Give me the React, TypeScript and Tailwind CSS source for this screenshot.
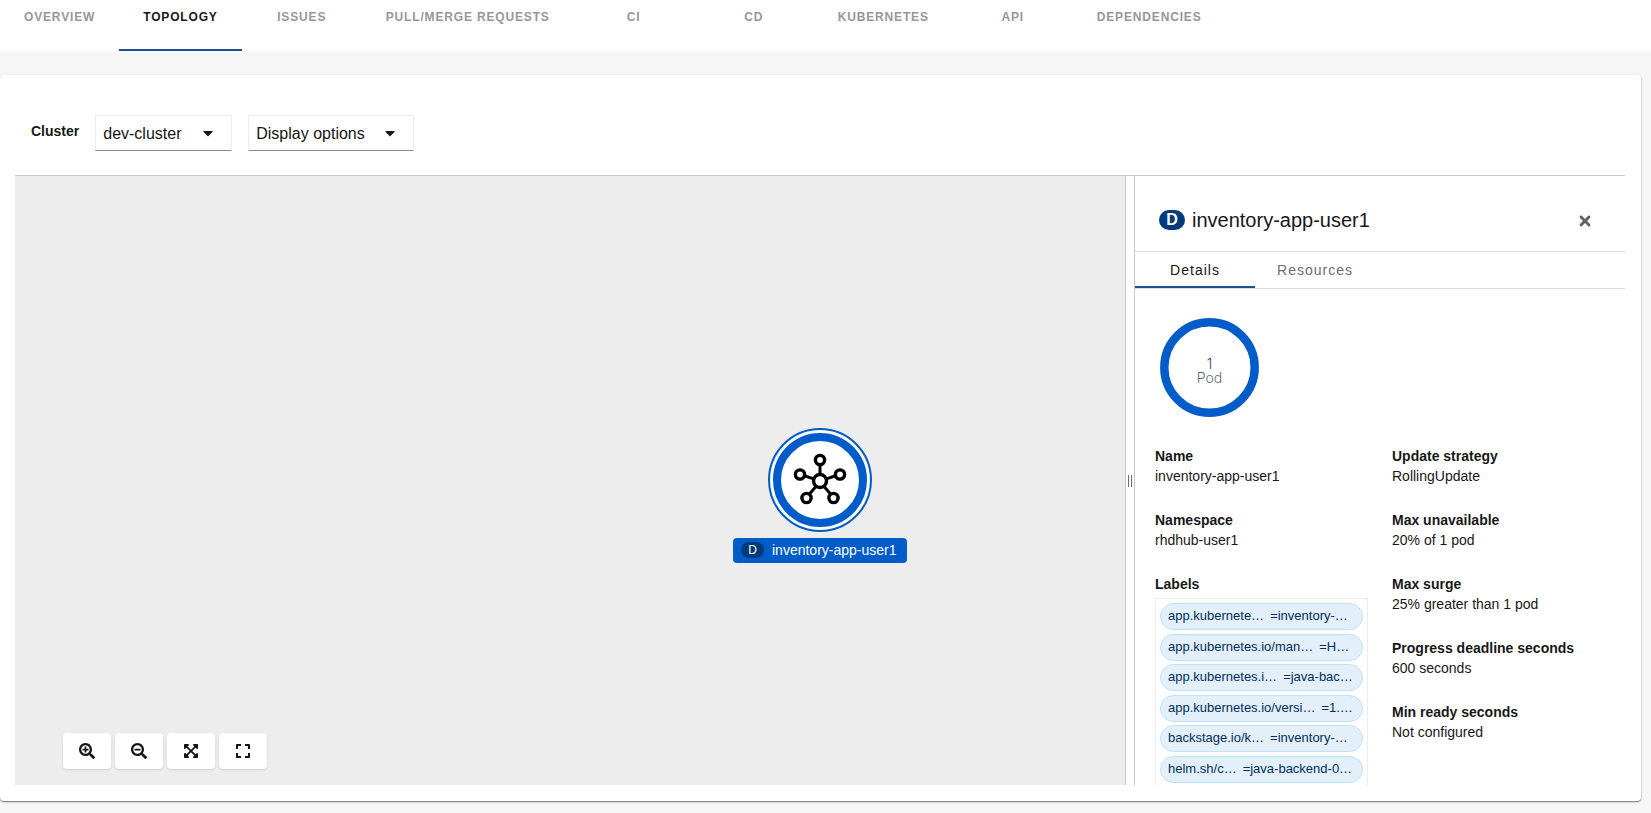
import { FaCaretDown, FaExpand, FaExpandArrowsAlt, FaSearchMinus, FaSearchPlus, FaTimes } from 'react-icons/fa';

const navTabs = [
  'OVERVIEW',
  'TOPOLOGY',
  'ISSUES',
  'PULL/MERGE REQUESTS',
  'CI',
  'CD',
  'KUBERNETES',
  'API',
  'DEPENDENCIES',
];

const labels = [
  ['app.kubernete…', '=inventory-…'],
  ['app.kubernetes.io/man…', '=H…'],
  ['app.kubernetes.i…', '=java-bac…'],
  ['app.kubernetes.io/versi…', '=1.…'],
  ['backstage.io/k…', '=inventory-…'],
  ['helm.sh/c…', '=java-backend-0…'],
];

const strategy = [
  ['Update strategy', 'RollingUpdate'],
  ['Max unavailable', '20% of 1 pod'],
  ['Max surge', '25% greater than 1 pod'],
  ['Progress deadline seconds', '600 seconds'],
  ['Min ready seconds', 'Not configured'],
];

const controls = [
  { name: 'Zoom in', Icon: FaSearchPlus },
  { name: 'Zoom out', Icon: FaSearchMinus },
  { name: 'Fit to screen', Icon: FaExpandArrowsAlt },
  { name: 'Reset view', Icon: FaExpand },
];

function NavTabs() {
  return (
    <nav className="flex h-[51px] shrink-0 bg-white">
      {navTabs.map((tab) => (
        <a
          key={tab}
          href="#"
          className={
            tab === 'TOPOLOGY'
              ? 'flex min-w-[120px] justify-center border-b-2 border-[#1f4f8f] px-6 pt-[9px] text-xs leading-4 font-bold tracking-[0.07em] text-[#181818]'
              : 'flex min-w-[120px] justify-center px-6 pt-[9px] text-xs leading-4 font-bold tracking-[0.07em] text-[#979797] first:min-w-[119px]'
          }
        >
          {tab}
        </a>
      ))}
    </nav>
  );
}

function Dropdown({ id, label, value, width }: { id: string; label: string; value: string; width: string }) {
  return (
    <div className={`relative ${width}`}>
      <select
        id={id}
        aria-label={label}
        className="h-9 w-full appearance-none border border-b-[#8a8d90] border-[#ededed] bg-white px-[7px] pt-[2px] text-base text-[#151515]"
      >
        <option>{value}</option>
      </select>
      <FaCaretDown className="pointer-events-none absolute top-[10px] right-4 size-4 text-[#151515]" />
    </div>
  );
}

function WorkloadNode() {
  return (
    <div className="absolute top-[252px] left-[718px] flex flex-col items-center gap-[6px]">
      <svg className="size-[104px]" viewBox="0 0 104 104" fill="none">
        <circle cx="52" cy="52" r="51" fill="#fff" stroke="#005cc8" strokeWidth="2" />
        <circle cx="52" cy="52" r="43" stroke="#005cc8" strokeWidth="8" />
        <g stroke="#000" strokeWidth="3.4">
          <path d="M52 37v10M37 48l8 2.600M67 48L59 50.600M41.500 66l6-7M62.500 66l-6-7" strokeWidth="3" />
          <circle cx="52" cy="53" r="6.500" />
          <circle cx="52" cy="32" r="4.600" />
          <circle cx="32" cy="46.500" r="4.600" />
          <circle cx="72" cy="46.500" r="4.600" />
          <circle cx="38.500" cy="70" r="4.600" />
          <circle cx="65.500" cy="70" r="4.600" />
        </g>
      </svg>
      <div className="flex h-[25px] items-center gap-2 rounded bg-[#005cc8] pr-[10px] pb-px pl-2 text-sm text-white">
        <span className="flex h-4 w-[23px] items-center justify-center rounded-full bg-[#003a78] text-xs">D</span>
        <span>inventory-app-user1</span>
      </div>
    </div>
  );
}

function Detail({ term, value }: { term: string; value: string }) {
  return (
    <div>
      <dt className="font-bold">{term}</dt>
      <dd>{value}</dd>
    </div>
  );
}

function SidePanel() {
  return (
    <aside className="flex w-[490px] shrink-0 flex-col text-[#181818]">
      <div className="flex h-[76px] shrink-0 items-center border-b border-[#dcdcdc] pt-3 pr-8 pl-6">
        <span className="flex h-5 w-[26px] items-center justify-center rounded-full bg-[#003a78] text-base font-bold text-white">
          D
        </span>
        <h2 className="ml-[7px] text-xl font-medium">inventory-app-user1</h2>
        <button type="button" aria-label="Close" className="ml-auto pt-[2px] text-[#5f6368]">
          <FaTimes className="size-4" />
        </button>
      </div>
      <div className="flex h-[37px] shrink-0 border-b border-[#dcdcdc] text-sm font-medium tracking-[1px]" role="tablist">
        <button type="button" role="tab" className="w-[120px] border-b-2 border-[#1f4f8f] pt-[2px] text-[#181818]">
          Details
        </button>
        <button type="button" role="tab" className="w-[120px] text-[#6a6e73]">
          Resources
        </button>
      </div>
      <div className="flex min-h-0 flex-1 flex-col overflow-y-auto px-5 pt-[28px] [scrollbar-width:none]">
        <svg className="ml-1 size-[101px] shrink-0" viewBox="0 0 101 101">
          <circle cx="50.5" cy="50.5" r="45.2" fill="none" stroke="#005cc8" strokeWidth="8.4" />
          <text x="50.5" y="52" textAnchor="middle" className="fill-[#3c3f42] font-['Inter',sans-serif] text-sm font-light">
            1
          </text>
          <text x="50.5" y="66" textAnchor="middle" className="fill-[#6a6e73] font-['Inter',sans-serif] text-sm font-light">
            Pod
          </text>
        </svg>
        <div className="mt-[28px] flex gap-6 text-sm leading-5">
          <dl className="flex w-[213px] flex-col gap-6">
            <Detail term="Name" value="inventory-app-user1" />
            <Detail term="Namespace" value="rhdhub-user1" />
            <div>
              <dt className="font-bold">Labels</dt>
              <dd className="mt-1 border border-[#ededed] p-1">
                <ul className="flex h-[180px] flex-col justify-between text-[13px] leading-4 text-[#002f5d]">
                  {labels.map(([key, value]) => (
                    <li
                      key={key}
                      className="flex h-[27px] items-center gap-[6px] rounded-full border border-[#bee1f4] bg-[#e3eff9] px-[7px] pb-px whitespace-nowrap"
                    >
                      <span>{key}</span>
                      <span>{value}</span>
                    </li>
                  ))}
                </ul>
              </dd>
            </div>
          </dl>
          <dl className="flex flex-col gap-6">
            {strategy.map(([term, value]) => (
              <Detail key={term} term={term} value={value} />
            ))}
          </dl>
        </div>
      </div>
    </aside>
  );
}

export default function App() {
  return (
    <div className="flex h-screen flex-col bg-[#f6f6f6] font-['Liberation_Sans',Arial,sans-serif]">
      <NavTabs />
      <main className="mt-6 mr-[10px] mb-3 flex min-h-0 flex-1 flex-col rounded bg-white pr-4 pb-4 pl-[15px] shadow-[0_1px_1px_rgba(0,0,0,0.4),0_1px_3px_rgba(0,0,0,0.2)]">
        <div className="flex h-[101px] shrink-0 items-center gap-4 border-b border-[#c9c9c9] pt-[15px] pl-4">
          <label htmlFor="cluster" className="pb-[3px] text-sm font-bold text-[#181818]">
            Cluster
          </label>
          <Dropdown id="cluster" label="Cluster" value="dev-cluster" width="w-[137px]" />
          <Dropdown id="display" label="Display options" value="Display options" width="w-[166px]" />
        </div>
        <div className="flex min-h-0 flex-1">
          <section className="relative flex flex-1 flex-col justify-end bg-[#ededed] pb-4 pl-12">
            <WorkloadNode />
            <div className="flex gap-1">
              {controls.map(({ name, Icon }) => (
                <button
                  key={name}
                  type="button"
                  aria-label={name}
                  className="flex h-9 w-12 items-center justify-center rounded bg-white text-[#151515] shadow-sm"
                >
                  <Icon className="size-4" />
                </button>
              ))}
            </div>
          </section>
          <div className="flex w-[10px] shrink-0 items-center justify-center gap-[2px] border-x border-[#c9c9c9] bg-white">
            <span className="h-3 w-px bg-[#6a6e73]" />
            <span className="h-3 w-px bg-[#6a6e73]" />
          </div>
          <SidePanel />
        </div>
      </main>
    </div>
  );
}
